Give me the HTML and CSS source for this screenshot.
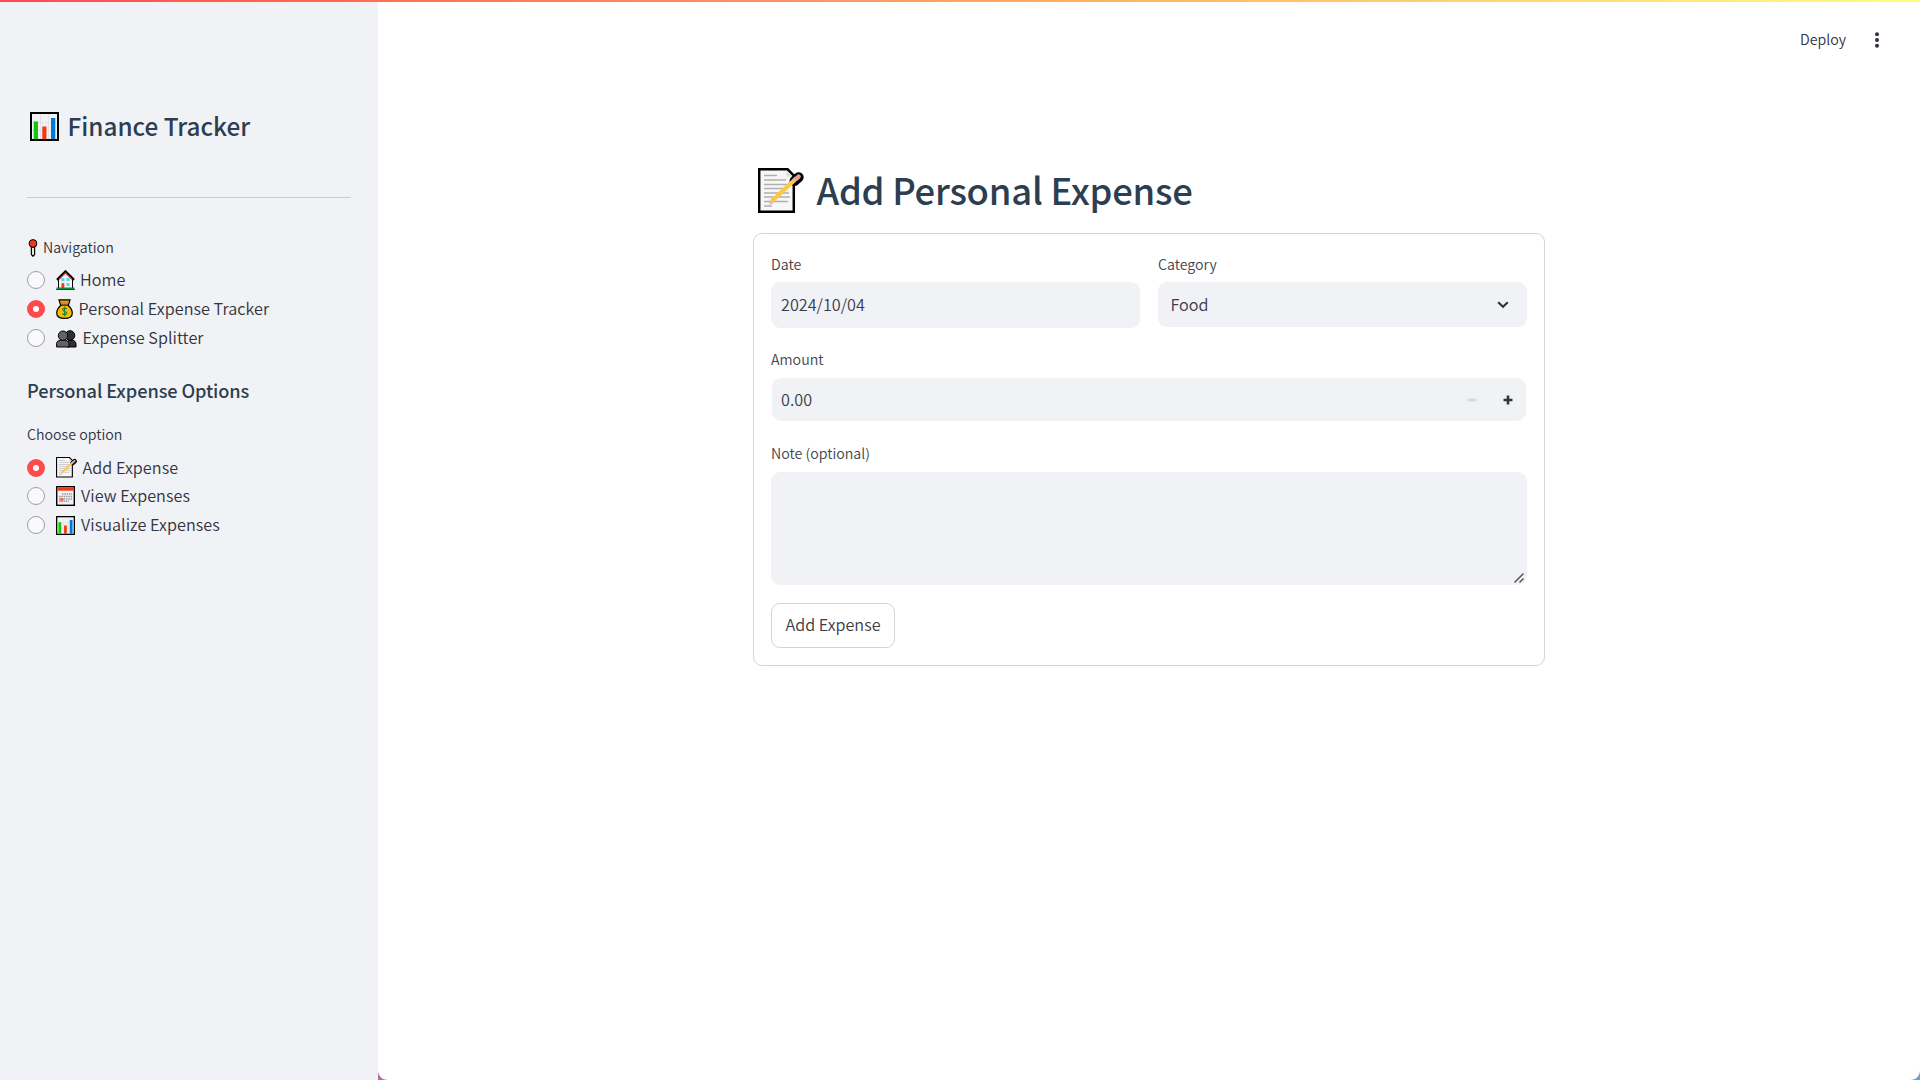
FILE: index.html
```html
<!DOCTYPE html>
<html lang="en">
<head>
<meta charset="utf-8">
<title>Finance Tracker</title>
<link rel="stylesheet" href="styles.css">
</head>
<body>
<svg class="defs" width="0" height="0">
  <symbol id="chart" viewBox="0 0 29 29">
    <rect x="1" y="1" width="27" height="27" fill="#f2f2f2" stroke="#000" stroke-width="2"/>
    <path d="M10.5 2v25M18.500 2v25M2 10.500h25M2 18.500h25" stroke="#dedede" stroke-width=".8"/>
    <path d="M3.700 9.500h4.300v17.500h-4.300z" fill="#16c60c"/>
    <path d="M12.300 14.500h4.200v12.500h-4.200z" fill="#f03a17"/>
    <path d="M21 6h4.300v21h-4.300z" fill="#0078d7"/>
  </symbol>
  <symbol id="note" viewBox="0 0 46 46">
    <path d="M1.200 1.200h28.300l6.300 6.300v36.300h-34.600z" fill="#f7f7f7" stroke="#000" stroke-width="2.500"/>
    <path d="M28.500 2.500v6h6z" fill="#dcdcdc"/>
    <path d="M6 7.500h13M6 12h22M6 16.500h24M6 20.500h22M6 25h25M6 29h26M6 33.500h24M6 38h8" stroke="#b0b0b0" stroke-width="1.300"/>
    <path d="M36.500 13L40.700 9.300" stroke="#000" stroke-width="10" stroke-linecap="round"/>
    <path d="M14 33L36 12.500" stroke="#ffc83d" stroke-width="4.400"/>
    <path d="M12.300 31.300L11 37l5-2z" fill="#f2b8a2"/>
    <path d="M35.500 13L38.500 10.200" stroke="#bcc4ca" stroke-width="4.400"/>
    <path d="M38.700 10.300L40.600 8.600" stroke="#f39b8b" stroke-width="4.400" stroke-linecap="round"/>
  </symbol>
  <symbol id="pin" viewBox="0 0 10 18">
    <path d="M3.400 8h3.200v7.500L5 17.300l-1.600-1.800z" fill="#e8e8e8" stroke="#000" stroke-width="1.200"/>
    <circle cx="5" cy="4.500" r="3.900" fill="#f03a17" stroke="#000" stroke-width="1"/>
  </symbol>
  <symbol id="house" viewBox="0 0 19 20">
    <path d="M2.500 18.500V8L9.500 1.500L16.500 8v10.500z" fill="#f4f4f4" stroke="#000" stroke-width="1"/>
    <path d="M1 9.800L9.500 1.500L18 9.800" fill="none" stroke="#000" stroke-width="2.400"/>
    <path d="M3 9.300L9.500 3L16 9.300" fill="none" stroke="#f03a17" stroke-width="1.100"/>
    <path d="M5.500 8h3v3h-3zM10.500 8h3v3h-3zM10.500 13h3v3h-3z" fill="#50d9f4"/>
    <path d="M5.500 13.200h2.800v5.300H5.500z" fill="#f03a17"/>
    <path d="M.5 18.500h18" stroke="#10893e" stroke-width="2"/><path d="M0 19.700h19" stroke="#000" stroke-width=".8"/>
  </symbol>
  <symbol id="money" viewBox="0 0 17 20">
    <path d="M5.200 6C3 8 .7 10.500 .7 14c0 4 3 5.400 7.800 5.400s7.800-1.400 7.800-5.400c0-3.500-2.300-6-4.500-8z" fill="#ffb900" stroke="#000" stroke-width="1.200"/>
    <path d="M3 .8h11l-1.500 5h-8z" fill="#d99a1c" stroke="#000" stroke-width="1.200"/>
    <path d="M5 5.600h7" stroke="#8e562e" stroke-width="1.500"/>
    <path d="M10.700 10c-.8-1.200-4-1.200-4 .8s4 1.300 4 3.300-3.400 2-4.300.5M8.600 7.800v9.400" stroke="#10893e" stroke-width="1.200" fill="none"/>
  </symbol>
  <symbol id="people" viewBox="0 0 21 18">
    <path d="M11 17v-3.500c0-3 2-3.500 4-3.500s5 .8 5 4V17z" fill="#303030" stroke="#000"/>
    <circle cx="14" cy="5.500" r="4.800" fill="#303030" stroke="#000"/>
    <path d="M.6 17v-3.300c0-2.700 2.500-3.700 5.900-3.700s6.500 1 6.500 3.700V17z" fill="#636363" stroke="#000"/>
    <circle cx="7" cy="5.700" r="4.700" fill="#636363" stroke="#000"/>
  </symbol>
  <symbol id="calendar" viewBox="0 0 19 20">
    <rect x=".7" y=".7" width="17.600" height="18.600" fill="#f2f2f2" stroke="#000" stroke-width="1.400"/>
    <path d="M1.400 1.400h16.200v3.300H1.400z" fill="#f03a17"/>
    <path d="M6 8h10M3 10.500h13M3 13h13M3 15.300h10" stroke="#999" stroke-width="1.500" stroke-dasharray="1.500 .8"/>
    <circle cx="5.800" cy="13.500" r="1.800" fill="#f4694f"/>
  </symbol>
</svg>
<div class="app">
  <aside class="sidebar">
    <h2 class="brand"><svg class="brand-icon"><use href="#chart"/></svg><span>Finance Tracker</span></h2>
    <hr class="rule">
    <div class="label nav-label"><svg class="pin"><use href="#pin"/></svg><span>Navigation</span></div>
    <div class="options nav-options">
      <div class="option"><i class="radio"></i><svg class="emoji house"><use href="#house"/></svg><span>Home</span></div>
      <div class="option"><i class="radio on"></i><svg class="emoji money"><use href="#money"/></svg><span>Personal Expense Tracker</span></div>
      <div class="option"><i class="radio"></i><svg class="emoji people"><use href="#people"/></svg><span>Expense Splitter</span></div>
    </div>
    <h3 class="subhead">Personal Expense Options</h3>
    <div class="label">Choose option</div>
    <div class="options">
      <div class="option"><i class="radio on"></i><svg class="emoji note"><use href="#note"/></svg><span>Add Expense</span></div>
      <div class="option"><i class="radio"></i><svg class="emoji calendar"><use href="#calendar"/></svg><span>View Expenses</span></div>
      <div class="option"><i class="radio"></i><svg class="emoji chart"><use href="#chart"/></svg><span>Visualize Expenses</span></div>
    </div>
  </aside>
  <main class="main">
    <header class="toolbar">
      <span class="deploy">Deploy</span>
      <svg class="dots" viewBox="0 0 6 18"><circle cx="3" cy="3.200" r="2"/><circle cx="3" cy="9" r="2"/><circle cx="3" cy="14.800" r="2"/></svg>
    </header>
    <section class="content">
      <h1 class="title"><svg class="title-icon"><use href="#note"/></svg><span>Add Personal Expense</span></h1>
      <div class="form">
        <div class="columns">
          <div class="field"><div class="label">Date</div><div class="input date">2024/10/04</div></div>
          <div class="field"><div class="label">Category</div><div class="input select"><span>Food</span>
            <svg class="chevron" viewBox="0 0 12 8"><path d="M1.200 1.200L6 5.800l4.800-4.600"/></svg></div></div>
        </div>
        <div class="field amount"><div class="label">Amount</div>
          <div class="input number"><span>0.00</span>
            <svg class="step minus" viewBox="0 0 10 10"><path d="M.5 5h9"/></svg>
            <svg class="step" viewBox="0 0 10 10"><path d="M.5 5h9M5 .5v9"/></svg></div></div>
        <div class="field note-field"><div class="label">Note (optional)</div>
          <div class="input area"><svg class="grip" viewBox="0 0 12 12"><path d="M1.500 10.500L10.500 1.500M6.500 10.500l4-4"/></svg></div></div>
        <div class="button">Add Expense</div>
      </div>
    </section>
  </main>
  <div class="strip"></div>
  <svg class="corner left" viewBox="0 0 10 10"><path d="M0 0C0 6 4 10 10 10H0z" fill="#b768a9"/></svg>
  <svg class="corner right" viewBox="0 0 10 10"><path d="M10 0C10 6 6 10 0 10h10z" fill="#7199db"/></svg>
</div>
</body>
</html>
```
FILE: styles.css
```css
* { box-sizing: border-box; }
body { margin: 0; background: #fff; color: #31333f; font: 350 16.2px/24px "Noto Sans CJK SC", "Noto Sans", sans-serif; }
h1, h2, h3 { margin: 0; color: #2c3e50; font-weight: 500; }
svg { display: block; flex: none; }
.defs { position: absolute; }
.app { position: relative; display: flex; width: 1920px; height: 1080px; overflow: hidden; }
.strip { position: absolute; top: 0; left: 0; width: 100%; height: 2px; background: linear-gradient(90deg, #ff4b4b, #fffd80); }
.corner { position: absolute; bottom: 0; width: 10px; height: 10px; }
.corner.left { left: 378px; }
.corner.right { right: 0; }

.sidebar { width: 378px; padding: 105px 27px 0; background: #f0f2f6; }
.brand { display: flex; height: 40px; font-size: 24.300px; line-height: 42px; }
.brand-icon { width: 29px; height: 29px; margin: 7px 8.500px 0 3px; }
.rule { height: 1px; margin: 52px 0 37px; border: 0; background: #c9cbd0; }
.label { height: 24px; font-size: 14.200px; line-height: 24px; }
.nav-label { display: flex; }
.pin { width: 10px; height: 18px; margin: 4px 5px 0 1px; }
.nav-options { margin-top: 7px; }
.option { display: flex; align-items: center; height: 28.750px; letter-spacing: .05px; }
.option span { padding-bottom: 2px; }
.radio { width: 18px; height: 18px; margin-right: 11px; border: 1px solid #9c9ea7; border-bottom-width: 1.500px; border-radius: 50%; background: #fafafc; flex: none; }
.radio.on { border: 6px solid #ff4b4b; background: #fff; }
.house { width: 19px; height: 20px; margin-right: 5px; }
.money { width: 17px; height: 20px; margin-right: 5.500px; }
.people { width: 21px; height: 18px; margin: 2px 5.500px 0 0; }
.note { width: 21px; height: 21px; margin-right: 5.500px; }
.calendar { width: 19px; height: 20px; margin-right: 6px; }
.chart { width: 19px; height: 19px; margin-right: 6px; }
.subhead { height: 28px; margin: 24px 0 17px; font-size: 18.200px; line-height: 28px; letter-spacing: -.1px; }
.subhead + .label { height: 24px; margin: 18px 0 7px; }

.main { flex: 1; }
.toolbar { display: flex; justify-content: flex-end; align-items: center; height: 80px; padding-right: 40px; font-size: 14.200px; }
.deploy { margin-right: 28px; padding-bottom: 2px; }
.dots { width: 6px; height: 18px; fill: #31333f; }
.content { width: 792px; margin: 80px auto 0; }
.title { display: flex; height: 73px; font-size: 36.400px; line-height: 58px; letter-spacing: -.24px; }
.title-icon { width: 46px; height: 46px; margin: 8px 12.500px 0 5px; }
.form { height: 433px; padding: 18px 17px 17px; border: 1px solid #d3d4d8; border-radius: 9px; }
.columns { display: flex; gap: 18px; }
.field { flex: 1; }
.form .label { margin-bottom: 6px; color: #42444f; }
.input { display: flex; align-items: center; padding-bottom: 2px; border-radius: 9px; background: #f0f2f6; color: #3a3c48; }
.date { height: 46px; padding-left: 10px; }
.select { height: 45px; padding-left: 12.500px; }
.chevron { width: 12px; height: 8px; margin: 2px 18px 0 auto; fill: none; stroke: #31333f; stroke-width: 2.200; }
.amount { margin-top: 19px; }
.amount .label { margin-bottom: 7px; }
.number { height: 43px; margin: 0 1px; padding-left: 9px; }
.step { width: 10px; height: 10px; margin: 2px 13px 0 26px; fill: none; stroke: #31333f; stroke-width: 2.600; }
.step.minus { margin: 2px 0 0 auto; stroke: #d5dae5; }
.note-field { margin-top: 20px; }
.note-field .label { margin-bottom: 7px; }
.area { height: 113px; align-items: flex-end; justify-content: flex-end; padding: 0 2px 1px 0; }
.grip { width: 12px; height: 12px; stroke: #555; stroke-width: 1.500; }
.button { width: 124px; height: 45px; margin-top: 18px; border: 1px solid #d3d4d8; border-radius: 9px; text-align: center; line-height: 41px; color: #3a3c48; }
```
